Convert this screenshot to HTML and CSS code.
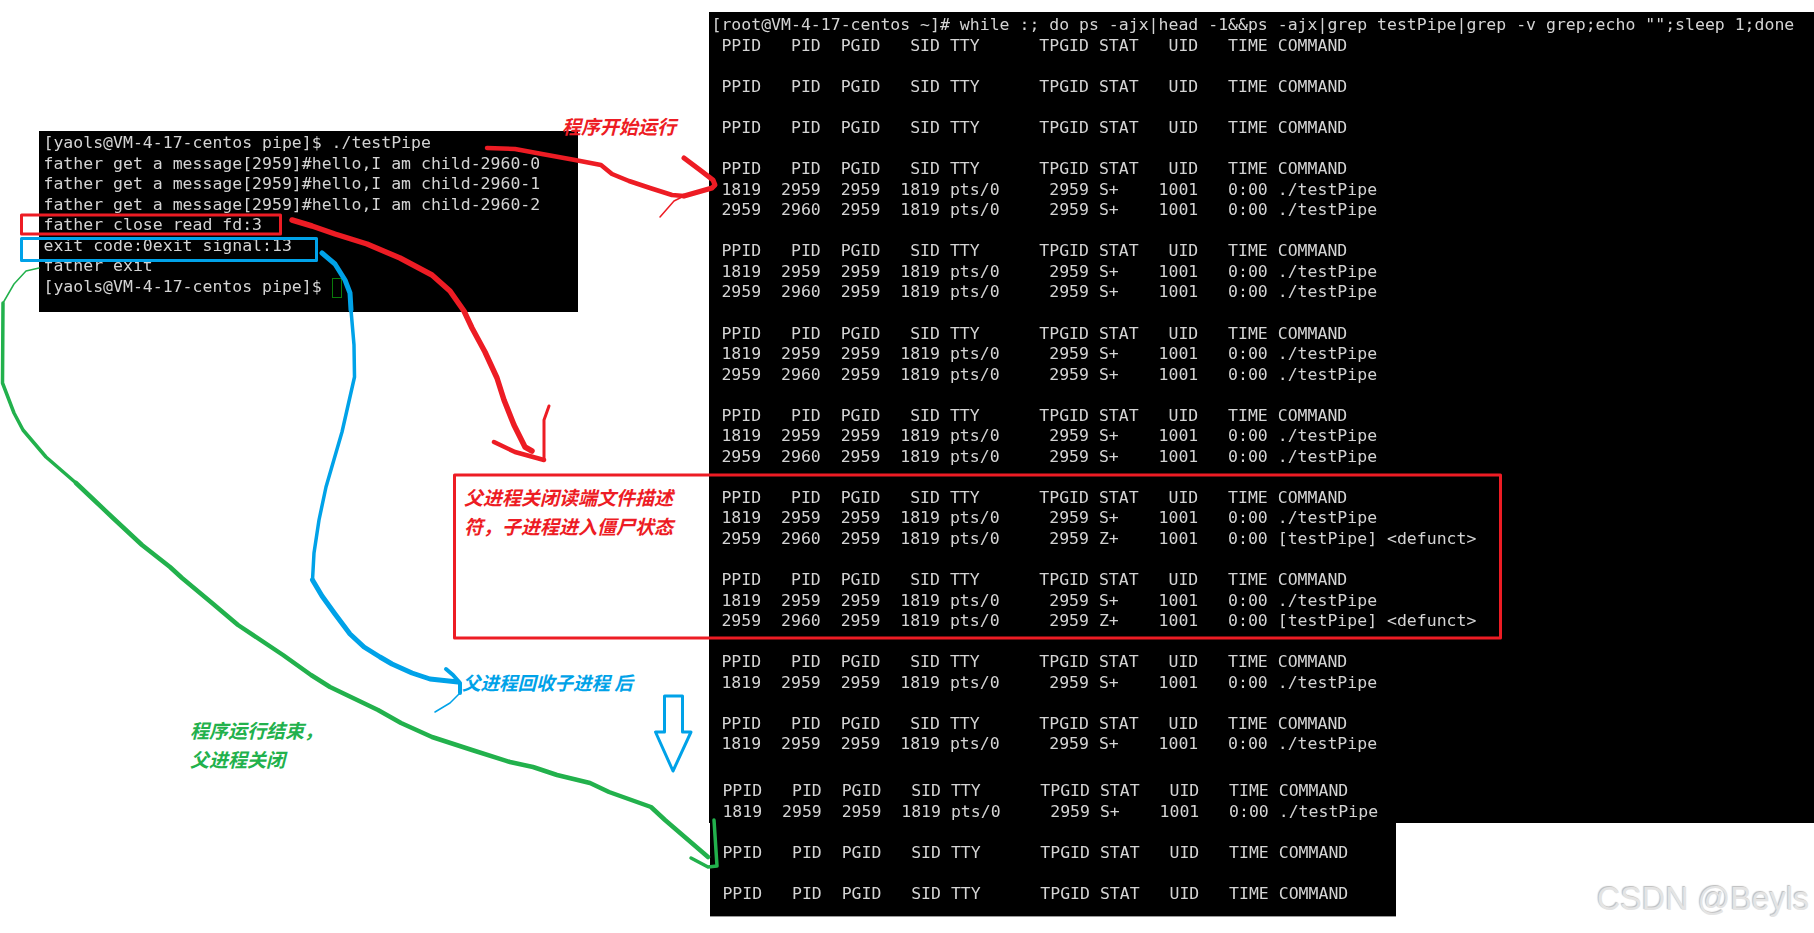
FILE: index.html
```html
<!DOCTYPE html>
<html lang="zh-CN">
<head>
<meta charset="utf-8">
<title>testPipe</title>
<link rel="stylesheet" href="styles.css">
</head>
<body>
<main class="canvas">
<section class="shot shot-main"><pre class="term">[root@VM-4-17-centos ~]# while :; do ps -ajx|head -1&amp;&amp;ps -ajx|grep testPipe|grep -v grep;echo "";sleep 1;done
 PPID   PID  PGID   SID TTY      TPGID STAT   UID   TIME COMMAND

 PPID   PID  PGID   SID TTY      TPGID STAT   UID   TIME COMMAND

 PPID   PID  PGID   SID TTY      TPGID STAT   UID   TIME COMMAND

 PPID   PID  PGID   SID TTY      TPGID STAT   UID   TIME COMMAND
 1819  2959  2959  1819 pts/0     2959 S+    1001   0:00 ./testPipe
 2959  2960  2959  1819 pts/0     2959 S+    1001   0:00 ./testPipe

 PPID   PID  PGID   SID TTY      TPGID STAT   UID   TIME COMMAND
 1819  2959  2959  1819 pts/0     2959 S+    1001   0:00 ./testPipe
 2959  2960  2959  1819 pts/0     2959 S+    1001   0:00 ./testPipe

 PPID   PID  PGID   SID TTY      TPGID STAT   UID   TIME COMMAND
 1819  2959  2959  1819 pts/0     2959 S+    1001   0:00 ./testPipe
 2959  2960  2959  1819 pts/0     2959 S+    1001   0:00 ./testPipe

 PPID   PID  PGID   SID TTY      TPGID STAT   UID   TIME COMMAND
 1819  2959  2959  1819 pts/0     2959 S+    1001   0:00 ./testPipe
 2959  2960  2959  1819 pts/0     2959 S+    1001   0:00 ./testPipe

 PPID   PID  PGID   SID TTY      TPGID STAT   UID   TIME COMMAND
 1819  2959  2959  1819 pts/0     2959 S+    1001   0:00 ./testPipe
 2959  2960  2959  1819 pts/0     2959 Z+    1001   0:00 [testPipe] &lt;defunct&gt;

 PPID   PID  PGID   SID TTY      TPGID STAT   UID   TIME COMMAND
 1819  2959  2959  1819 pts/0     2959 S+    1001   0:00 ./testPipe
 2959  2960  2959  1819 pts/0     2959 Z+    1001   0:00 [testPipe] &lt;defunct&gt;

 PPID   PID  PGID   SID TTY      TPGID STAT   UID   TIME COMMAND
 1819  2959  2959  1819 pts/0     2959 S+    1001   0:00 ./testPipe

 PPID   PID  PGID   SID TTY      TPGID STAT   UID   TIME COMMAND
 1819  2959  2959  1819 pts/0     2959 S+    1001   0:00 ./testPipe</pre></section>

<section class="shot shot-tail"><pre class="term"> PPID   PID  PGID   SID TTY      TPGID STAT   UID   TIME COMMAND
 1819  2959  2959  1819 pts/0     2959 S+    1001   0:00 ./testPipe

 PPID   PID  PGID   SID TTY      TPGID STAT   UID   TIME COMMAND

 PPID   PID  PGID   SID TTY      TPGID STAT   UID   TIME COMMAND</pre></section>

<section class="shot shot-left"><pre class="term">[yaols@VM-4-17-centos pipe]$ ./testPipe
father get a message[2959]#hello,I am child-2960-0
father get a message[2959]#hello,I am child-2960-1
father get a message[2959]#hello,I am child-2960-2
father close read fd:3
exit code:0exit signal:13
father exit
[yaols@VM-4-17-centos pipe]$ </pre><span class="cursor"></span></section>

<svg class="ink" width="1814" height="933" viewBox="0 0 1814 933" fill="none" stroke-linecap="round" stroke-linejoin="round" aria-hidden="true">
  <g class="ink-red">
    <rect x="454.5" y="475" width="1046" height="163" stroke-width="3"/>
    <rect x="21.5" y="215" width="259" height="19" stroke-width="3"/>
    <path stroke-width="4.5" d="M487 148 L515 149 L542 154 L575 160 L601 165 L612 174 L629 181 L650 188 L672 195 L684 196"/>
    <path stroke-width="5" d="M684 158 L700 170 L713 180 L715 185 L712 188 L684 196"/>
    <path stroke-width="1.5" d="M684 196 L674 201 L660 217"/>
    <path stroke-width="5.5" d="M292 220 L312 226 L335 234 L367 244 L400 258 L432 275 L450 291 L464 311 L472 328 L485 352 L497 378 L504 400 L514 425 L525 447 L532 451"/>
    <path stroke-width="4.5" d="M494 442 L515 452 L544 460"/>
    <path stroke-width="3" d="M544 460 L544 420 L549 406"/>
  </g>
  <g class="ink-blue">
    <rect x="21.5" y="238.5" width="295" height="22" stroke-width="3"/>
    <path stroke-width="5" d="M322 253 L335 264 L345 280 L350 293 L351 310"/>
    <path stroke-width="3.5" d="M351 310 L354 345 L354.5 377 L342 432 L326 487 L319 520 L314 553 L312.5 580"/>
    <path stroke-width="5" d="M312.5 580 L322 596 L335 614 L350 634 L364 647 L380 657 L392 664 L412 673 L430 679 L458 682"/>
    <path stroke-width="4" d="M446 669 L453 675 L460 683 L460 693"/>
    <path stroke-width="1.5" d="M460 693 L450 703 L435 712"/>
    <path stroke-width="3" d="M664.5 696 H682.5 V732 H691 L673 771 L655.5 732 H664.5 Z"/>
  </g>
  <g class="ink-green">
    <path stroke-width="1.5" d="M39 268 L26 271 L14 284 L3 303"/>
    <path stroke-width="3.5" d="M3 303 L2.5 383 L14 413 L23 430 L46 457 L76 483"/>
    <path stroke-width="4.5" d="M76 483 L94 500 L113 518 L142 545 L170 567 L182 578 L212 603 L238 625 L283 655 L311 675 L330 687 L378 710 L401 723 L432 737 L472 750 L510 762 L533 767 L557 775 L590 783 L609 792 L651 807 L665 820 L708 857"/>
    <path stroke-width="3.5" d="M714 820 L717 866 L708 867 L691 858"/>
  </g>
</svg>

<p class="note note-red note-start">程序开始运行</p>
<p class="note note-red note-close">父进程关闭读端文件描述<br>符，子进程进入僵尸状态</p>
<p class="note note-blue note-reap">父进程回收子进程 后</p>
<p class="note note-green note-end">程序运行结束，<br>父进程关闭</p>
<p class="mark">CSDN @Beyls</p>
</main>
</body>
</html>
```
FILE: styles.css
```css
* { box-sizing: border-box; }
html, body { margin: 0; padding: 0; background: #fff; }
.canvas { position: relative; width: 1814px; height: 933px; overflow: hidden; background: #fff; }

.shot { position: absolute; background: #000; }
.shot-main { left: 709px; top: 12px; width: 1105px; height: 811px; padding: 3.300px 0 0 2.500px; }
.shot-tail { left: 710px; top: 762px; width: 686px; height: 155px; padding: 19.400px 0 0 2.500px; border-bottom: 1px solid #999; }
.shot-left { left: 39px; top: 131px; width: 539px; height: 181px; padding: 2px 0 0 4.500px; }

.term {
  margin: 0;
  font-family: "DejaVu Sans Mono", monospace;
  font-size: 16.500px;
  line-height: 20.550px;
  color: #d4d4d4;
  white-space: pre;
  filter: blur(0.4px);
}

.cursor { position: absolute; left: 292.500px; top: 146.500px; width: 10px; height: 20px; border: 1px solid #0a7a0a; }

.ink { position: absolute; left: 0; top: 0; }
.ink-red { stroke: #ed1c24; }
.ink-blue { stroke: #00a2e8; }
.ink-green { stroke: #22b14c; }

.note {
  position: absolute;
  margin: 0;
  font-family: "Noto Sans CJK SC", sans-serif;
  font-size: 19px;
  font-weight: 700;
  font-style: italic;
  line-height: 29px;
  white-space: nowrap;
}
.note-red { color: #ed1c24; }
.note-blue { color: #00a2e8; }
.note-green { color: #22b14c; }
.note-start { left: 562px; top: 111px; }
.note-close { left: 464px; top: 481.500px; }
.note-reap { left: 462px; top: 668px; font-size: 18.500px; }
.note-end { left: 190px; top: 715px; }

.mark {
  position: absolute;
  left: 1597px;
  top: 881px;
  margin: 0;
  font-family: "Liberation Sans", sans-serif;
  font-size: 32.300px;
  line-height: 37px;
  white-space: nowrap;
  color: #e4e4e4;
  text-shadow: -1px -1px 1px #bdbdbd;
}
```
